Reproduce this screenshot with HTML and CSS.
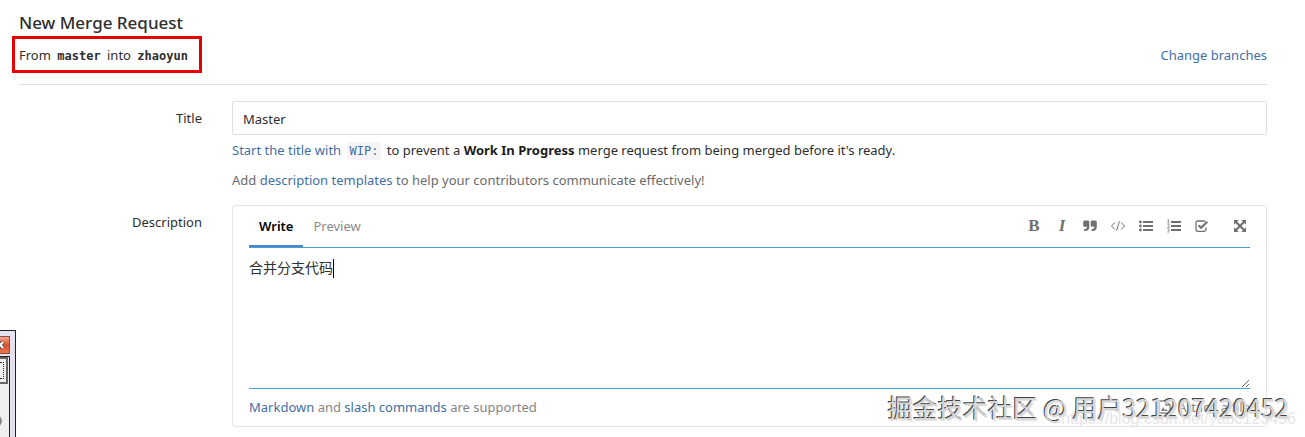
FILE: index.html
```html
<!DOCTYPE html>
<html lang="en">
<head>
    <meta charset="UTF-8">
    <meta name="viewport" content="width=device-width, initial-scale=1.0">
    <title>New Merge Request</title>
    <link rel="stylesheet" href="styles.css">
</head>
<body>
    <main class="content">
        <h3 class="page-title">New Merge Request</h3>
        <div class="branches">
            <p class="branch-info">From <code>master</code> into <code>zhaoyun</code></p>
            <a href="#" class="change-link">Change branches</a>
        </div>

        <form class="merge-form">
            <div class="form-group">
                <label class="form-label" for="title">Title</label>
                <div class="form-control-wrap">
                    <input class="form-control" type="text" id="title" value="Master">
                    <p class="help dark"><a href="#">Start the title with <code>WIP:</code></a> to prevent a <strong>Work In Progress</strong> merge request from being merged before it's ready.</p>
                    <p class="help">Add <a href="#">description templates</a> to help your contributors communicate effectively!</p>
                </div>
            </div>

            <div class="form-group">
                <label class="form-label" for="description">Description</label>
                <div class="md-area">
                    <div class="md-header">
                        <button type="button" class="tab active">Write</button>
                        <button type="button" class="tab">Preview</button>
                        <div class="toolbar">
                            <button type="button" class="tool letter" aria-label="Bold">B</button>
                            <button type="button" class="tool letter italic" aria-label="Italic">I</button>
                            <button type="button" class="tool" aria-label="Quote">
                                <svg viewBox="0 0 14 14"><path d="M1.5 1.5h3.3q1.5 0 1.5 1.5v4.7q0 4-4 4.3H1.2v-2h1q1.9-.3 1.9-2.3H1.7Q.2 7.700.2 6.200V3Q.2 1.500 1.500 1.500zM9 1.500h3.300q1.500 0 1.500 1.500v4.700q0 4-4 4.300H8.700v-2h1q1.900-.3 1.900-2.300H9.200Q7.700 7.700 7.700 6.200V3Q7.700 1.500 9 1.500z"/></svg>
                            </button>
                            <button type="button" class="tool" aria-label="Code">
                                <svg class="line" viewBox="0 0 14 14"><path d="M3.800 3.500L.5 7l3.300 3.500M10.200 3.500L13.500 7l-3.300 3.500M8.400 2.200L5.600 11.800"/></svg>
                            </button>
                            <button type="button" class="tool" aria-label="Bullet list">
                                <svg viewBox="0 0 14 14"><circle cx="1.400" cy="3" r="1.400"/><circle cx="1.400" cy="7" r="1.400"/><circle cx="1.400" cy="11" r="1.400"/><path d="M4 2h10v2H4zM4 6h10v2H4zM4 10h10v2H4z"/></svg>
                            </button>
                            <button type="button" class="tool" aria-label="Numbered list">
                                <svg viewBox="0 0 14 14"><path d="M4 2h10v2H4zM4 6h10v2H4zM4 10h10v2H4z"/><path class="thin" d="M.4 1l1-.6V4M.3 4h2.200M.4 5.700q1.900-.8 1.900.5Q2.200 7.300.5 8.500h2M.4 10h1.900l-1 1.300q1.200.1 1.100 1.100-.4 1.300-2.100.7"/></svg>
                            </button>
                            <button type="button" class="tool" aria-label="Task list">
                                <svg viewBox="0 0 14 14"><path class="box" d="M11 8.500v2q0 1.800-1.800 1.800H2.800Q1 12.300 1 10.500V3.800Q1 2 2.800 2h6.400q.6 0 1 .2"/><path class="tick" d="M3.600 6.200l2.500 2.600 6.200-6.100"/></svg>
                            </button>
                            <button type="button" class="tool full" aria-label="Fullscreen">
                                <svg viewBox="0 0 14 14"><path d="M1 1h4.800L1 5.800zM13 1v4.800L8.200 1zM1 13V8.200L5.800 13zM13 13H8.200L13 8.200z"/><path class="cross" d="M3 3l8 8M11 3l-8 8"/></svg>
                            </button>
                        </div>
                    </div>
                    <div class="editor">
                        <textarea id="description">合并分支代码</textarea>
                        <span class="caret"></span>
                    </div>
                    <div class="md-footer">
                        <p><a href="#">Markdown</a> and <a href="#">slash commands</a> are supported</p>
                        <button type="button" class="attach">
                            <svg viewBox="0 0 14 14"><path class="box" d="M1 1h7l4 4v8H1zM8 1v4h4"/><path d="M3 11l2-4 2 3 1-1 2 2z"/></svg>
                            Attach a file
                        </button>
                    </div>
                </div>
            </div>
        </form>
    </main>

    <!-- corner of the floating tool window -->
    <div class="tool-window">
        <button type="button" class="window-close" aria-label="Close">
            <svg viewBox="0 0 9 16"><path class="close-edge" d="M-2 5l5 6M3 5l-5 6"/><path class="close-cross" d="M-2 5l5 6M3 5l-5 6"/></svg>
        </button>
        <div class="window-body">
            <div class="window-button"></div>
            <div class="window-knob"></div>
        </div>
    </div>

    <div class="blog-mark">https://blog.csdn.net/yabc123456</div>
    <div class="watermark">掘金技术社区 @ 用户321207420452</div>
</body>
</html>
```
FILE: styles.css
```css
* {
    box-sizing: border-box;
}

body {
    margin: 0;
    background: #fff;
    color: #2e2e2e;
    font-family: "Noto Sans", "Noto Sans CJK SC", sans-serif;
    font-size: 13px;
    line-height: 20px;
    position: relative;
    overflow: hidden;
}

a {
    color: #3f6fa5;
    text-decoration: none;
}

p {
    margin: 0;
}

button,
input,
textarea {
    font: inherit;
    color: inherit;
}

button {
    border: none;
    background: none;
    padding: 0;
    cursor: pointer;
}

.content {
    padding: 10px 38px 0 19px;
}

.page-title {
    margin: 0;
    font-size: 17px;
    font-weight: 500;
    line-height: 26px;
}

.branches {
    display: flex;
    justify-content: space-between;
    align-items: center;
    border-bottom: 1px solid #e0e0e0;
    padding-bottom: 11px;
    margin-bottom: 16px;
}

.branch-info {
    border: 3px solid #e60000;
    margin-left: -7px;
    padding: 6px 8px 4px 4px;
    line-height: 20px;
}

.branch-info code {
    font-family: "DejaVu Sans Mono", monospace;
    font-size: 12px;
    font-weight: bold;
    padding: 0 3px;
}

.form-group {
    display: flex;
    gap: 30px;
    margin-bottom: 15px;
}

.form-label {
    flex: 0 0 15%;
    max-width: 183px;
    padding-top: 7px;
    text-align: right;
}

.form-control-wrap,
.md-area {
    flex: 1;
    min-width: 0;
}

.form-control {
    display: block;
    width: 100%;
    height: 34px;
    padding: 7px 10px 5px;
    border: 1px solid #e0e0e0;
    border-radius: 2px;
    outline: none;
}

.help {
    margin-top: 9px;
    color: #6b6b6b;
}

.help.dark {
    margin-top: 5px;
    color: #2e2e2e;
}

.help strong {
    color: #1c1c1c;
}

.help code {
    font-family: "DejaVu Sans Mono", monospace;
    font-size: 12px;
    padding: 2px 3px;
    margin: 0 2px;
    background: #f7f4f7;
    border-radius: 3px;
}

.md-area {
    border: 1px solid #e3e3e3;
    border-radius: 3px;
    padding: 0 16px;
}

.md-header {
    display: flex;
    border-bottom: 1px solid #4a9fc9;
}

.tab {
    height: 41px;
    padding: 0 10px 2px;
    color: #8a8a8a;
}

.tab.active {
    color: #000;
    font-weight: 600;
    padding-bottom: 0;
    border-bottom: 2px solid #4a86d4;
    margin-bottom: -1px;
}

.toolbar {
    display: flex;
    align-items: center;
    gap: 14px;
    margin-left: auto;
    padding: 0 3px 2px 0;
    color: #707070;
}

.tool {
    width: 14px;
    height: 20px;
}

.tool.full {
    margin-left: 10px;
}

.tool.letter {
    font-family: "Liberation Serif", serif;
    font-size: 17px;
    font-weight: bold;
}

.tool.italic {
    font-style: italic;
}

svg {
    display: block;
    width: 14px;
    height: 14px;
    fill: currentColor;
}

.line,
.thin,
.box,
.tick,
.cross {
    fill: none;
    stroke: currentColor;
}

.thin {
    stroke-width: 0.7;
}

.box {
    stroke-width: 1.3;
}

.tick,
.cross {
    stroke-width: 2.2;
}

.editor {
    position: relative;
}

.editor textarea {
    display: block;
    width: 100%;
    height: 141px;
    padding: 10px 0;
    border: none;
    border-bottom: 1px solid #4a9fdc;
    outline: none;
    resize: vertical;
    background: transparent;
    font-size: 14px;
}

.caret {
    position: absolute;
    top: 11px;
    left: 84px;
    width: 1px;
    height: 19px;
    background: #000;
}

.md-footer {
    display: flex;
    justify-content: space-between;
    padding: 8px 0 9px;
    color: #858585;
}

.attach {
    display: flex;
    align-items: center;
    gap: 6px;
}

.tool-window {
    position: absolute;
    left: 0;
    top: 330px;
    width: 16px;
    height: 107px;
    border: 1px solid #222;
    border-width: 1px 1px 0 0;
    background: #e6e1ee;
    overflow: hidden;
}

.window-close {
    display: block;
    width: 10px;
    height: 18px;
    margin-top: 5px;
    background: linear-gradient(#f0a890, #d8532c 50%, #e87850);
    border: 1px solid #8c4a40;
    border-left: none;
}

.window-close svg {
    width: 9px;
    height: 16px;
}

.close-edge {
    stroke: #5c4a50;
    stroke-width: 4;
}

.close-cross {
    stroke: #fff;
    stroke-width: 2;
}

.window-body {
    width: 10px;
    height: 82px;
    margin-top: 2px;
    border: 1px solid #222;
    border-width: 1px 1px 0 0;
    background: #f0f0f0;
}

.window-button {
    width: 8px;
    height: 27px;
    border: 2px solid #666;
    border-left: none;
    position: relative;
}

.window-button::after {
    content: '';
    position: absolute;
    inset: 3px 2px 3px 0;
    border: 1px dotted #222;
    border-left: none;
}

.window-knob {
    width: 12px;
    height: 12px;
    margin: 31px 0 0 -10px;
    border-radius: 50%;
    background: #888;
}

.blog-mark,
.watermark {
    position: absolute;
    white-space: nowrap;
    pointer-events: none;
}

.blog-mark {
    top: 409px;
    right: 9px;
    color: #e6e6e6;
    font-family: "Liberation Sans", sans-serif;
    font-size: 16px;
}

.watermark {
    top: 389px;
    right: 16px;
    color: #d6d6d6;
    font-family: "Noto Sans CJK SC", sans-serif;
    font-size: 25px;
    line-height: 36px;
    text-shadow: -1px -1px #444, 1px 1px 1px #ddd;
}
```
